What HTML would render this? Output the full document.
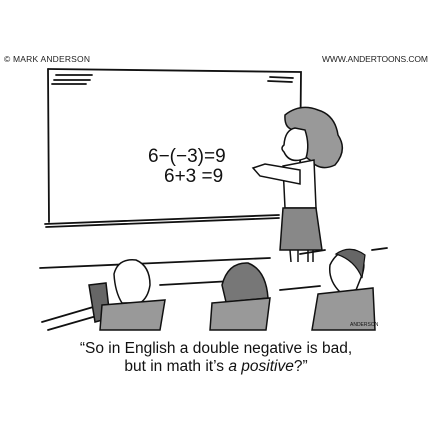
<!DOCTYPE html>
<html><head><style>
body{margin:0;background:#fff;width:432px;height:432px;overflow:hidden}
svg{display:block}
</style></head><body>
<svg width="432" height="432" viewBox="0 0 432 432" xmlns="http://www.w3.org/2000/svg" font-family="Liberation Sans, sans-serif">
<rect width="432" height="432" fill="#fff"/>
<text x="4" y="62" font-size="8.5" fill="#222" textLength="86">© MARK ANDERSON</text>
<text x="322" y="62" font-size="8.5" fill="#222" textLength="106">WWW.ANDERTOONS.COM</text>
<g fill="none" stroke="#111" stroke-width="1.8" stroke-linecap="round">
<path d="M48 69 L301 72 L300 172"/>
<path d="M48 69 L49 222"/>
<path d="M45 224 L279 215"/>
<path d="M46 227 L279 218"/>
<path d="M56 75 L92 75 M54 80 L90 80 M52 84 L86 84 M270 77 L293 78 M268 81 L292 82"/>
<path d="M40 268 L270 258 M300 254 L325 250 M372 250 L387 248"/>
<path d="M42 322 L100 305 M48 330 L100 315 M160 285 L250 280 M280 290 L320 286"/>
</g>
<text x="148" y="162" font-size="19" fill="#111">6−(−3)=9</text>
<text x="164" y="182" font-size="19" fill="#111">6+3 =9</text>
<!-- teacher -->
<path d="M285 115 Q300 103 318 110 Q335 115 338 135 Q348 150 335 165 Q320 172 310 160 Q300 155 296 130 Q284 130 285 115Z" fill="#999" stroke="#111" stroke-width="1.5"/>
<path d="M295 128 Q285 130 284 145 Q280 148 284 152 Q290 165 306 158 Q310 145 305 130Z" fill="#fff" stroke="#111" stroke-width="1.5"/>
<path d="M283 166 L314 160 L316 208 L285 208Z" fill="#fff" stroke="#111" stroke-width="1.5"/>
<path d="M253 168 L260 176 L300 184 L300 170 L265 164Z" fill="#fff" stroke="#111" stroke-width="1.5"/>
<path d="M283 208 L316 208 L322 250 L280 250Z" fill="#888" stroke="#111" stroke-width="1.5"/>
<path d="M290 250 L291 262 M298 250 L298 262 M308 250 L308 262 M313 250 L313 262" stroke="#111" stroke-width="1.5"/>
<!-- students -->
<path d="M114 274 Q118 258 136 260 Q150 266 150 285 Q148 298 140 303 L122 303 Q115 292 114 274Z" fill="#fff" stroke="#111" stroke-width="1.5"/>
<path d="M89 285 L106 283 L110 318 L95 322Z" fill="#666" stroke="#111" stroke-width="1.5"/>
<path d="M102 305 L165 300 L160 330 L100 330Z" fill="#999" stroke="#111" stroke-width="1.5"/>
<path d="M222 285 Q228 262 248 263 Q266 270 268 298 L226 302Z" fill="#777" stroke="#111" stroke-width="1.5"/>
<path d="M212 303 L270 298 L266 330 L210 330Z" fill="#999" stroke="#111" stroke-width="1.5"/>
<path d="M330 265 Q338 248 355 250 Q368 258 362 275 L356 290 L340 292 Q328 280 330 265Z" fill="#fff" stroke="#111" stroke-width="1.5"/>
<path d="M336 254 Q350 244 365 255 L362 278 Q355 260 336 254Z" fill="#666" stroke="#111" stroke-width="1.2"/>
<path d="M318 294 L373 288 L375 330 L312 330Z" fill="#999" stroke="#111" stroke-width="1.5"/>
<text x="350" y="326" font-size="5" fill="#111">ANDERSON</text>
<text x="216" y="353" font-size="15.5" text-anchor="middle" fill="#111">“So in English a double negative is bad,</text>
<text x="216" y="371" font-size="15.5" text-anchor="middle" fill="#111">but in math it’s <tspan font-style="italic">a positive</tspan>?”</text>
</svg>
</body></html>
